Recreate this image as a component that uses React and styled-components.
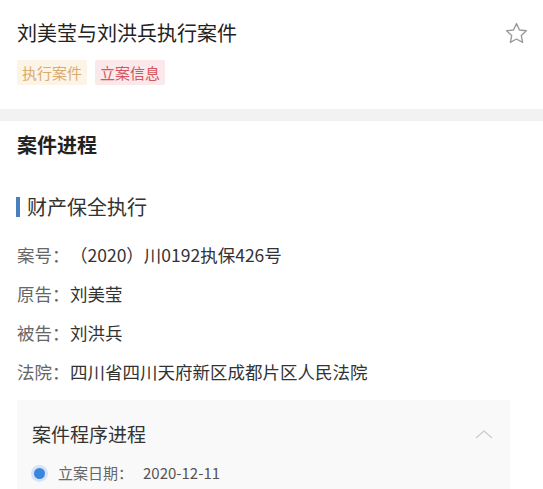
import React from "react";
import styled, { createGlobalStyle } from "styled-components";

const Global = createGlobalStyle`
  html, body { margin: 0; padding: 0; background: #fff; }
  body { font-family: "Noto Sans CJK SC", "Noto Sans", sans-serif; width: 543px; height: 489px; overflow: hidden; }
`;

const Page = styled.div`
  display: flex;
  flex-direction: column;
`;

const Header = styled.header`
  padding: 18px 14px 24px 17px;
  display: flex;
  flex-direction: column;
  gap: 12px;
`;

const TitleRow = styled.div`
  display: flex;
  align-items: center;
  justify-content: space-between;
  height: 30px;
`;

const Title = styled.h1`
  margin: 0;
  font-size: 20px;
  font-weight: 400;
  color: #222;
  line-height: 30px;
`;

const Tags = styled.div`
  display: flex;
  gap: 8px;
`;

const Tag = styled.span`
  font-size: 15px;
  line-height: 25px;
  padding: 0 5px;
  border-radius: 2px;
  color: ${p => p.$tone === "red" ? "#d45560" : "#d9ab6c"};
  background: ${p => p.$tone === "red" ? "#fbe8ea" : "#fdf4e8"};
`;

const Divider = styled.div`
  height: 12px;
  background: #f2f2f2;
`;

const Section = styled.section`
  padding: 10px 0 0 17px;
  display: flex;
  flex-direction: column;
`;

const SectionTitle = styled.h2`
  margin: 0;
  font-size: 20px;
  font-weight: 700;
  color: #222;
  line-height: 28px;
`;

const SubTitle = styled.h3`
  margin: 35px 0 0 -1px;
  font-size: 20px;
  font-weight: 400;
  color: #333;
  line-height: 26px;
  display: flex;
  align-items: center;
  gap: 7px;
  &::before {
    content: "";
    width: 4px;
    height: 20px;
    background: #4a7fc0;
  }
`;

const Fields = styled.div`
  margin-top: 23px;
  display: flex;
  flex-direction: column;
  gap: 15px;
`;

const Field = styled.div`
  display: flex;
  font-size: 17.5px;
  line-height: 24px;
`;

const Label = styled.span`
  color: #666;
  width: 53px;
`;

const Value = styled.span`
  color: #333;
`;

const Card = styled.div`
  margin: 16px 33px 0 0;
  background: #f9f9f9;
  padding: 20px 16px 20px 15px;
  display: flex;
  flex-direction: column;
  gap: 14px;
`;

const CardHead = styled.div`
  display: flex;
  justify-content: space-between;
  align-items: center;
`;

const CardTitle = styled.span`
  font-size: 19px;
  color: #333;
  line-height: 28px;
`;

const Step = styled.div`
  display: flex;
  align-items: center;
  gap: 10px;
  font-size: 15px;
  line-height: 22px;
  color: #666;
  margin-left: -1px;
`;

const Dot = styled.span`
  width: 11px;
  height: 11px;
  border-radius: 50%;
  background: #3b86dd;
  box-shadow: 0 0 0 3px #d4e4f8;
  margin: 0 3px 0 3px;
`;

const StepValue = styled.span`
  color: #555;
`;

const Star = () => (
  <svg width="25" height="25" viewBox="0 0 24 24" fill="none" stroke="#9a9a9a" strokeWidth="1.3" strokeLinejoin="round">
    <path d="M12 2.5l2.9 6.1 6.6.8-4.9 4.6 1.3 6.6L12 17.3l-5.9 3.3 1.3-6.6-4.9-4.6 6.6-.8z" />
  </svg>
);

const Chevron = () => (
  <svg width="20" height="12" viewBox="0 0 20 12" fill="none" stroke="#cfcfcf" strokeWidth="1.5">
    <path d="M2 10l8-7 8 7" />
  </svg>
);

export default function App() {
  return (
    <Page>
      <Global />
      <Header>
        <TitleRow>
          <Title>刘美莹与刘洪兵执行案件</Title>
          <Star />
        </TitleRow>
        <Tags>
          <Tag>执行案件</Tag>
          <Tag $tone="red">立案信息</Tag>
        </Tags>
      </Header>
      <Divider />
      <Section>
        <SectionTitle>案件进程</SectionTitle>
        <SubTitle>财产保全执行</SubTitle>
        <Fields>
          <Field><Label>案号：</Label><Value>（2020）川0192执保426号</Value></Field>
          <Field><Label>原告：</Label><Value>刘美莹</Value></Field>
          <Field><Label>被告：</Label><Value>刘洪兵</Value></Field>
          <Field><Label>法院：</Label><Value>四川省四川天府新区成都片区人民法院</Value></Field>
        </Fields>
        <Card>
          <CardHead>
            <CardTitle>案件程序进程</CardTitle>
            <Chevron />
          </CardHead>
          <Step>
            <Dot />
            <span>立案日期：</span>
            <StepValue>2020-12-11</StepValue>
          </Step>
        </Card>
      </Section>
    </Page>
  );
}
